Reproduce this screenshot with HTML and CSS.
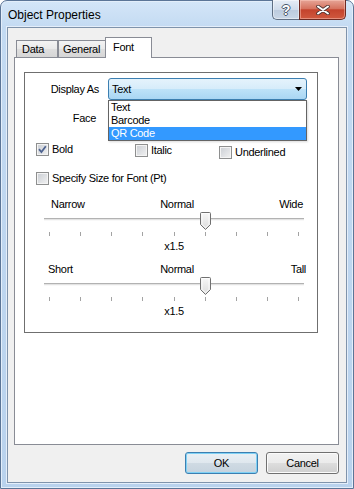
FILE: index.html
```html
<!DOCTYPE html>
<html lang="en">
	<head>
		<meta charset="UTF-8" />
		<meta name="viewport" content="width=device-width, initial-scale=1.0" />
		<title>Object Properties</title>
		<link rel="stylesheet" href="styles.css">
	</head>
	<body>
		<div class="window">
			<div class="titlebar">
				<span class="title">Object Properties</span>
				<div class="caption-btns">
					<div class="cap-btn help"><span>?</span></div>
					<div class="cap-btn close">
						<svg width="14" height="10" viewBox="0 0 14 10">
							<path d="M2 1.5 L12 8.5 M12 1.5 L2 8.5" stroke="#4a3230" stroke-width="3.6" stroke-linecap="round" />
							<path d="M2 1.5 L12 8.5 M12 1.5 L2 8.5" stroke="#ffffff" stroke-width="2" stroke-linecap="round" />
						</svg>
					</div>
				</div>
			</div>
			<div class="client">
				<div class="tabs">
					<div class="tab tab-data">Data</div>
					<div class="tab tab-general">General</div>
					<div class="tab tab-font active">Font</div>
				</div>
				<div class="tab-panel">
					<div class="group">
						<div class="field field-display">
							<span class="field-label">Display As</span>
							<div class="combo-wrap">
								<div class="combo open">
									<span>Text</span>
									<svg width="7" height="4" viewBox="0 0 7 4"><polygon points="0,0 7,0 3.5,4" fill="#000" /></svg>
								</div>
								<ul class="droplist">
									<li>Text</li>
									<li>Barcode</li>
									<li class="selected">QR Code</li>
								</ul>
							</div>
						</div>
						<div class="field field-face">
							<span class="field-label">Face</span>
							<div class="combo"></div>
						</div>
						<div class="checks">
							<label class="check check-bold">
								<span class="box">
									<svg width="11" height="11" viewBox="0 0 11 11"><path d="M2 5.2 L4.4 8 L8.8 2.2" fill="none" stroke="#4f6491" stroke-width="1.8" /></svg>
								</span>
								Bold
							</label>
							<label class="check check-italic"><span class="box"></span>Italic</label>
							<label class="check check-underline"><span class="box"></span>Underlined</label>
						</div>
						<label class="check check-size"><span class="box"></span>Specify Size for Font (Pt)</label>

						<div class="slider slider-width">
							<div class="slider-labels">
								<span>Narrow</span>
								<span>Normal</span>
								<span class="end">Wide</span>
							</div>
							<div class="slider-rail">
								<div class="track"></div>
								<svg class="thumb" width="11" height="18" viewBox="0 0 11 18">
									<defs>
										<linearGradient id="thumb1" x1="0" y1="0" x2="0" y2="1">
											<stop offset="0" stop-color="#f7f7f7" />
											<stop offset="1" stop-color="#dcdcdc" />
										</linearGradient>
									</defs>
									<path d="M1.5 .5h8a1 1 0 0 1 1 1V12.5L5.5 17.5 .5 12.5V1.5a1 1 0 0 1 1-1z" fill="url(#thumb1)" stroke="#707070" />
									<path d="M2 1.5h7v10.8L5.5 15.8 2 12.3z" fill="none" stroke="#ffffff" stroke-opacity=".8" />
								</svg>
							</div>
							<div class="ticks">
								<i></i><i></i><i></i><i></i><i></i><i></i><i></i><i></i><i></i>
							</div>
							<div class="slider-value">x1.5</div>
						</div>

						<div class="slider slider-height">
							<div class="slider-labels">
								<span>Short</span>
								<span>Normal</span>
								<span class="end">Tall</span>
							</div>
							<div class="slider-rail">
								<div class="track"></div>
								<svg class="thumb" width="11" height="18" viewBox="0 0 11 18">
									<defs>
										<linearGradient id="thumb2" x1="0" y1="0" x2="0" y2="1">
											<stop offset="0" stop-color="#f7f7f7" />
											<stop offset="1" stop-color="#dcdcdc" />
										</linearGradient>
									</defs>
									<path d="M1.5 .5h8a1 1 0 0 1 1 1V12.5L5.5 17.5 .5 12.5V1.5a1 1 0 0 1 1-1z" fill="url(#thumb2)" stroke="#707070" />
									<path d="M2 1.5h7v10.8L5.5 15.8 2 12.3z" fill="none" stroke="#ffffff" stroke-opacity=".8" />
								</svg>
							</div>
							<div class="ticks">
								<i></i><i></i><i></i><i></i><i></i><i></i><i></i><i></i><i></i>
							</div>
							<div class="slider-value">x1.5</div>
						</div>
					</div>
				</div>
				<div class="buttons">
					<button class="btn default">OK</button>
					<button class="btn">Cancel</button>
				</div>
			</div>
		</div>
	</body>
</html>
```

FILE: styles.css
```css
body,
html {
	margin: 0;
	padding: 0;
	background: #ffffff;
}
.window {
	width: 354px;
	height: 489px;
	box-sizing: border-box;
	border: 1px solid #5b7597;
	border-radius: 7px 7px 0 0;
	background: linear-gradient(#d4e6f8 0, #c3daf2 27px, #b9d2ed 100%);
	box-shadow: inset 0 0 0 1px #e3eefa;
	padding: 0 6px 5px;
	display: flex;
	flex-direction: column;
	font-family: 'Liberation Sans', Arial, sans-serif;
	font-size: 11px;
	letter-spacing: -0.3px;
	color: #000000;
}

/* title bar */
.titlebar {
	margin-top: -1px;
	height: 27px;
	display: flex;
	align-items: flex-start;
}
.title {
	flex: 1;
	margin: 8px 0 0 1px;
	font-size: 12px;
	letter-spacing: 0;
	line-height: 15px;
}
.caption-btns {
	display: flex;
	margin-right: 1px;
}
.cap-btn {
	height: 20px;
	box-sizing: border-box;
	border: 1px solid #5f6f84;
	border-top: none;
	display: flex;
	align-items: center;
	justify-content: center;
}
.help {
	width: 27px;
	border-right: none;
	border-radius: 0 0 0 5px;
	background: linear-gradient(#e6edf6, #d0dceb 50%, #bccbde 52%, #c9d7e7);
	box-shadow: inset 0 0 0 1px rgba(255, 255, 255, 0.45);
}
.help span {
	font-size: 14px;
	font-weight: bold;
	color: #ffffff;
	line-height: 14px;
	text-shadow: 1px 0 #49586b, -1px 0 #49586b, 0 1px #49586b, 0 -1px #49586b;
}
.close {
	width: 47px;
	border-color: #6e2a22;
	border-radius: 0 0 5px 0;
	background: linear-gradient(#e6a597, #d6735f 45%, #c4432d 52%, #d0593f);
	box-shadow: inset 0 0 0 1px rgba(255, 210, 200, 0.45);
}

/* client area */
.client {
	flex: 1;
	background: #f0f0f0;
	border: 1px solid #7f93ab;
	box-shadow: 0 0 0 1px #e4eefa;
	padding: 0 7px 0 6px;
	display: flex;
	flex-direction: column;
}

/* tabs */
.tabs {
	height: 29px;
	padding-left: 2px;
	display: flex;
	align-items: flex-end;
}
.tab {
	box-sizing: border-box;
	height: 17px;
	border: 1px solid #898c95;
	border-bottom: none;
	background: linear-gradient(#f3f3f3, #e9e9e9 50%, #dedede 52%, #d6d6d6);
	line-height: 15px;
	padding-top: 1px;
}
.tab-data {
	width: 42px;
	padding-left: 5px;
}
.tab-general {
	width: 48px;
	padding-left: 4px;
}
.tab.active {
	position: relative;
	z-index: 1;
	width: 47px;
	height: 21px;
	margin-left: -1px;
	margin-bottom: -1px;
	padding: 1px 0 0 7px;
	background: #ffffff;
	line-height: 17px;
}
.tab-panel {
	height: 388px;
	box-sizing: border-box;
	border: 1px solid #898c95;
	background: #ffffff;
	padding: 14px 0 0 9px;
}

/* group box */
.group {
	width: 294px;
	height: 261px;
	box-sizing: border-box;
	border: 1px solid #6f6f6f;
	display: flex;
	flex-direction: column;
}
.field {
	display: grid;
	grid-template-columns: 74px 199px;
	column-gap: 9px;
	align-items: center;
	height: 22px;
}
.field-display {
	margin-top: 5px;
}
.field-face {
	margin-top: 7px;
}
.field-label {
	text-align: right;
	line-height: 14px;
}
.field-face .field-label {
	padding-right: 3px;
}
.combo-wrap {
	position: relative;
	height: 22px;
}
.combo {
	height: 22px;
	box-sizing: border-box;
	border: 1px solid #707070;
	border-radius: 3px;
	background: linear-gradient(#f2f2f2, #ebebeb 50%, #dddddd 52%, #cfcfcf);
	display: flex;
	align-items: center;
	justify-content: space-between;
	padding: 0 4px 0 3px;
}
.combo.open {
	border-color: #3c7fb1;
	background: linear-gradient(#e5f3fc, #d6ecfa 50%, #bde2f8 52%, #a9d6f3);
}
.combo.open span {
	line-height: 14px;
}
.droplist {
	position: absolute;
	z-index: 5;
	top: 22px;
	left: 0;
	width: 199px;
	box-sizing: border-box;
	margin: 0;
	padding: 0;
	list-style: none;
	border: 1px solid #646464;
	background: #ffffff;
	box-shadow: 1px 1px 2px rgba(0, 0, 0, 0.15);
}
.droplist li {
	height: 13px;
	line-height: 13px;
	padding-left: 2px;
}
.droplist li.selected {
	background: #3399ff;
	color: #ffffff;
}

/* check boxes */
.checks {
	display: flex;
	align-items: flex-start;
	margin-top: 14px;
	padding-left: 11px;
	height: 16px;
}
.check {
	display: flex;
	align-items: center;
	gap: 3px;
	line-height: 13px;
}
.check-bold {
	width: 99px;
}
.check-italic {
	width: 84px;
	margin-top: 1px;
}
.check-underline {
	margin-top: 3px;
}
.check-size {
	margin: 13px 0 0 11px;
}
.box {
	width: 13px;
	height: 13px;
	box-sizing: border-box;
	border: 1px solid #8e8f8f;
	background: linear-gradient(135deg, #c9cdd3, #f2f2f2);
	box-shadow: inset 0 0 0 1px #f4f4f4;
	display: flex;
	align-items: center;
	justify-content: center;
}

/* sliders */
.slider {
	width: 260px;
	margin-left: 19px;
	display: flex;
	flex-direction: column;
}
.slider-width {
	margin-top: 12px;
}
.slider-height {
	margin-top: 9px;
}
.slider-labels {
	display: grid;
	grid-template-columns: 1fr auto 1fr;
	line-height: 14px;
}
.slider-width .slider-labels {
	padding: 0 1px 0 7px;
}
.slider-height .slider-labels {
	padding-left: 4px;
	margin-right: -2px;
}
.slider-labels .end {
	text-align: right;
}
.slider-rail {
	position: relative;
	height: 18px;
	margin-top: 1px;
}
.track {
	margin-top: 6px;
	height: 3px;
	box-sizing: border-box;
	border-top: 1px solid #b2b2b2;
	background: #e3e3e3;
	border-bottom: 1px solid #f8f8f8;
}
.thumb {
	position: absolute;
	top: 0;
	left: 156px;
}
.ticks {
	margin-top: 2px;
	height: 4px;
	padding: 0 5px;
	display: flex;
	justify-content: space-between;
}
.ticks i {
	width: 1px;
	background: #a3a3a3;
}
.slider-value {
	margin-top: 3px;
	line-height: 14px;
	text-align: center;
}

/* dialog buttons */
.buttons {
	margin-top: 7px;
	display: flex;
	justify-content: flex-end;
	gap: 8px;
}
.btn {
	width: 73px;
	height: 22px;
	box-sizing: border-box;
	border: 1px solid #707070;
	border-radius: 3px;
	background: linear-gradient(#f2f2f2, #ebebeb 50%, #dddddd 52%, #cfcfcf);
	box-shadow: inset 0 0 0 1px #fbfbfb;
	font: inherit;
	letter-spacing: inherit;
	color: #000000;
	padding: 0;
}
.btn.default {
	border-color: #3c7fb1;
	background: linear-gradient(#eaf0f5, #dfe7ee 50%, #cfdae3 52%, #c6d3de);
	box-shadow: inset 0 0 0 1px #7fd1f5;
}
```
